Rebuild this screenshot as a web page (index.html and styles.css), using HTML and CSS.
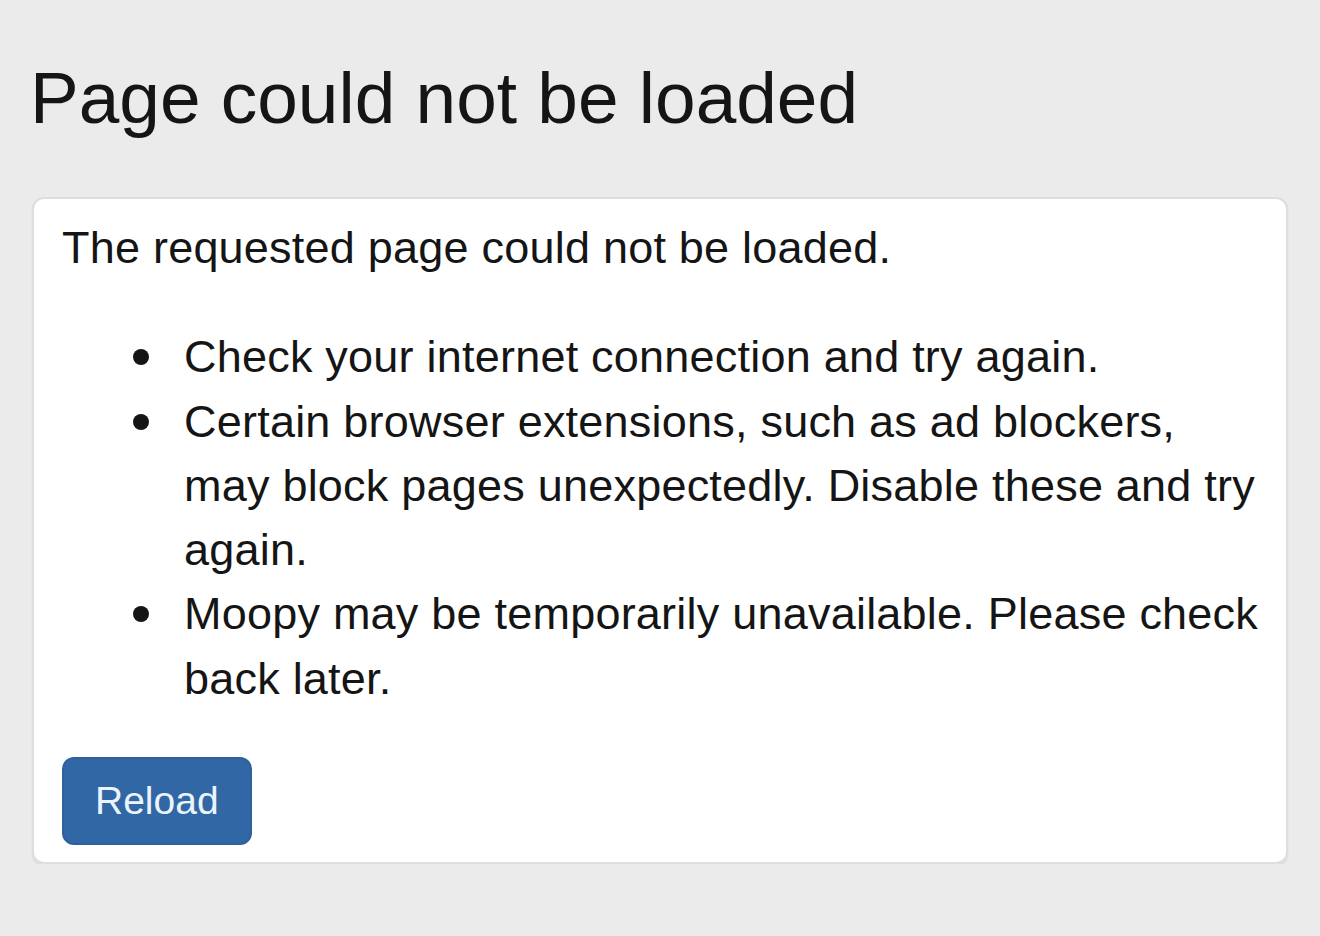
FILE: index.html
```html
<!DOCTYPE html>
<html lang="en">
<head>
<meta charset="utf-8">
<title>Page could not be loaded</title>
<link rel="stylesheet" href="styles.css">
</head>
<body>
<main class="page">
  <h1 class="title">Page could not be loaded</h1>
  <section class="card">
    <p class="lead">The requested page could not be loaded.</p>
    <ul class="reasons">
      <li class="reason">Check your internet connection and try again.</li>
      <li class="reason">Certain browser extensions, such as ad blockers, may block pages unexpectedly. Disable these and try again.</li>
      <li class="reason">Moopy may be temporarily unavailable. Please check back later.</li>
    </ul>
    <button class="btn" type="button">Reload</button>
  </section>
</main>
</body>
</html>
```
FILE: styles.css
```css
html, body {
  margin: 0;
  padding: 0;
  background: #ebebeb;
}

body {
  font-family: "Liberation Sans", Arial, sans-serif;
  color: #151515;
}

.page {
  padding: 0 32px;
}

.title {
  margin: 58px 0 59px -2px;
  font-size: 73px;
  font-weight: 400;
  line-height: 80px;
  color: #151515;
}

.card {
  background: #fff;
  border: 2px solid #dedede;
  border-radius: 12px;
  box-shadow: 0 2px 2px rgba(0, 0, 0, 0.07);
  padding: 17px 14px 17px 28px;
  font-size: 45px;
  line-height: 64.3px;
  letter-spacing: 0.22px;
}

.lead {
  margin: 0 0 45px;
}

.reasons {
  margin: 0 0 46px;
  padding-left: 122px;
  list-style: none;
}

.reason {
  position: relative;
}

.reason::before {
  content: "";
  position: absolute;
  left: -51px;
  top: 24px;
  width: 16px;
  height: 16px;
  border-radius: 50%;
  background: #151515;
}

.btn {
  display: block;
  box-sizing: border-box;
  height: 88px;
  padding: 0 31px;
  font-family: inherit;
  font-size: 39px;
  line-height: 84px;
  color: #eaf4fb;
  background: #3267a5;
  border: 2px solid #2f609a;
  border-radius: 12px;
  cursor: pointer;
}
```
